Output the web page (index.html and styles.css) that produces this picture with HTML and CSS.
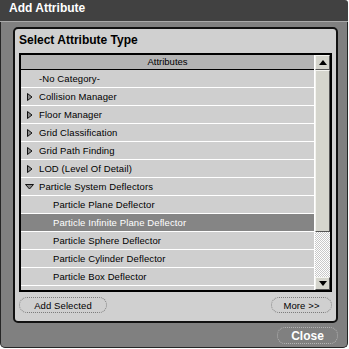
FILE: index.html
```html
<!DOCTYPE html>
<html>
<head>
<meta charset="utf-8">
<link rel="stylesheet" href="styles.css">
</head>
<body>
<div class="dialog">
  <div class="titlebar">Add Attribute</div>
  <div class="body">
    <div class="panel">
      <div class="panel-title">Select Attribute Type</div>
      <div class="table">
        <div class="list">
          <div class="header">Attributes</div>
          <div class="row nocat">-No Category-</div>
          <div class="row cat"><svg class="tri" width="6" height="8" viewBox="0 0 6 8"><polygon points="0.5,0.5 5,4 0.5,7.5" fill="#8a8a8a" stroke="#111" stroke-width="1"/></svg>Collision Manager</div>
          <div class="row cat"><svg class="tri" width="6" height="8" viewBox="0 0 6 8"><polygon points="0.5,0.5 5,4 0.5,7.5" fill="#8a8a8a" stroke="#111" stroke-width="1"/></svg>Floor Manager</div>
          <div class="row cat"><svg class="tri" width="6" height="8" viewBox="0 0 6 8"><polygon points="0.5,0.5 5,4 0.5,7.5" fill="#8a8a8a" stroke="#111" stroke-width="1"/></svg>Grid Classification</div>
          <div class="row cat"><svg class="tri" width="6" height="8" viewBox="0 0 6 8"><polygon points="0.5,0.5 5,4 0.5,7.5" fill="#8a8a8a" stroke="#111" stroke-width="1"/></svg>Grid Path Finding</div>
          <div class="row cat"><svg class="tri" width="6" height="8" viewBox="0 0 6 8"><polygon points="0.5,0.5 5,4 0.5,7.5" fill="#8a8a8a" stroke="#111" stroke-width="1"/></svg>LOD (Level Of Detail)</div>
          <div class="row cat open"><svg class="tri-d" width="9" height="6" viewBox="0 0 9 6"><polygon points="0.5,0.5 8.5,0.5 4.5,5" fill="#8a8a8a" stroke="#111" stroke-width="1"/></svg>Particle System Deflectors</div>
          <div class="row child">Particle Plane Deflector</div>
          <div class="row child selected">Particle Infinite Plane Deflector</div>
          <div class="row child">Particle Sphere Deflector</div>
          <div class="row child">Particle Cylinder Deflector</div>
          <div class="row child">Particle Box Deflector</div>
        </div>
        <div class="scrollbar">
          <div class="sb-btn sb-up"><svg width="8" height="5" viewBox="0 0 8 5"><polygon points="0,5 8,5 4,0" fill="#000"/></svg></div>
          <div class="sb-thumb"></div>
          <div class="sb-track"></div>
          <div class="sb-btn sb-down"><svg width="8" height="5" viewBox="0 0 8 5"><polygon points="0,0 8,0 4,5" fill="#000"/></svg></div>
        </div>
      </div>
      <div class="buttons">
        <button class="btn add">Add Selected</button>
        <button class="btn more">More &gt;&gt;</button>
      </div>
    </div>
    <div class="footer">
      <button class="close">Close</button>
    </div>
  </div>
</div>
</body>
</html>
```

FILE: styles.css
```css
* { box-sizing: border-box; }
html, body { margin: 0; padding: 0; background: #ffffff; }
body { font-family: "Liberation Sans", Arial, sans-serif; }

.dialog {
  width: 348px;
  height: 348px;
  display: flex;
  flex-direction: column;
}

.titlebar {
  height: 22px;
  background: #414141;
  border-bottom: 1px solid #a9a9a9;
  color: #ffffff;
  font-weight: bold;
  font-size: 12px;
  line-height: 17px;
  padding-left: 9px;
  border-radius: 0 3px 0 0;
}

.body {
  flex: 1;
  background: #808080;
  border: 1px solid #262626;
  border-top: none;
  border-radius: 0 0 5px 5px;
  padding: 5px 9px 3px 12px;
  display: flex;
  flex-direction: column;
}

.panel {
  height: 296px;
  background: #d0d0d0;
  border: 2px solid #111111;
  border-radius: 5px;
  padding: 0 4px 8px 4px;
  display: flex;
  flex-direction: column;
}

.panel-title {
  height: 24px;
  line-height: 23px;
  font-weight: bold;
  font-size: 12px;
  color: #000;
}

.table {
  height: 239px;
  border: 2px solid #000;
  display: flex;
  background: #cfcfcf;
}

.list {
  flex: 1;
  overflow: hidden;
}

.header {
  height: 15px;
  background: #b4b4b4;
  border-bottom: 1px solid #000;
  text-align: center;
  font-size: 9.5px;
  line-height: 14px;
  color: #000;
}

.row {
  height: 18px;
  border-bottom: 1px solid #ffffff;
  background: #cfcfcf;
  font-size: 9.5px;
  color: #000;
  display: flex;
  align-items: center;
  white-space: nowrap;
  letter-spacing: 0.1px;
}

.nocat { padding-left: 18px; }
.cat { padding-left: 6px; }
.tri { margin-right: 6px; margin-left: 0; }
.open { padding-left: 4px; }
.tri-d { margin-right: 5px; }
.child { padding-left: 32px; }
.selected { background: #858585; color: #ffffff; }

.scrollbar {
  width: 16px;
  display: flex;
  flex-direction: column;
  border-left: 1px solid #ffffff;
}

.sb-btn {
  background: #d5d5cd;
  border-top: 1px solid #f4f4f0;
  border-left: 1px solid #f4f4f0;
  border-right: 1px solid #555;
  border-bottom: 1px solid #555;
  display: flex;
  align-items: center;
  justify-content: center;
}
.sb-up { height: 15px; }
.sb-down { height: 13px; }

.sb-thumb {
  height: 162px;
  background: #d5d5cd;
  border-top: 1px solid #f4f4f0;
  border-left: 1px solid #f4f4f0;
  border-right: 1px solid #555;
  border-bottom: 1px solid #555;
}

.sb-track {
  flex: 1;
  background-color: #ffffff;
  background-image: conic-gradient(#c8c8c8 25%, #ffffff 0 50%, #c8c8c8 0 75%, #ffffff 0);
  background-size: 2px 2px;
}

.buttons {
  margin-top: 5px;
  height: 16px;
  display: flex;
  justify-content: space-between;
}

.btn {
  height: 16px;
  padding: 0;
  margin: 0;
  background: transparent;
  border: 1px dotted #7c7c7c;
  border-radius: 8px;
  font-family: "Liberation Sans", Arial, sans-serif;
  font-size: 9.5px;
  color: #000;
  letter-spacing: 0.1px;
}
.add { width: 88px; }
.more { width: 61px; }

.footer {
  margin-top: 4px;
  display: flex;
  justify-content: flex-end;
}

.close {
  width: 61px;
  height: 17px;
  padding: 0;
  margin: 0;
  background: transparent;
  border: 1px dotted #b4b4b4;
  border-radius: 8px;
  color: #ffffff;
  font-family: "Liberation Sans", Arial, sans-serif;
  font-weight: bold;
  font-size: 12px;
}
```
